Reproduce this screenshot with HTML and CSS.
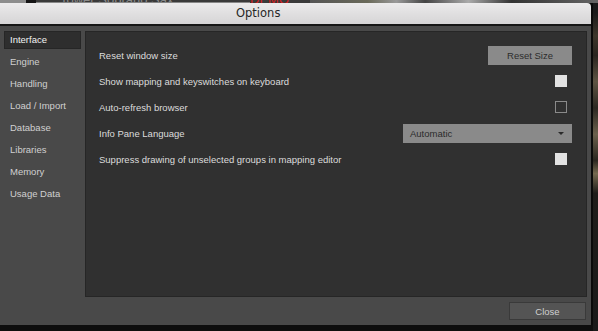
FILE: index.html
```html
<!DOCTYPE html>
<html>
<head>
<meta charset="utf-8">
<link rel="stylesheet" href="styles.css">
</head>
<body>
<div class="screen">
  <div class="app-strip">
    <span class="strip-a"></span>
    <span class="strip-b"></span>
    <span class="strip-name">Tower Soprano Sax</span>
    <span class="strip-demo">DEMO</span>
    <span class="strip-c"></span>
  </div>
  <div class="row-main">
    <div class="window">
      <div class="titlebar"><span class="title">Options</span></div>
      <div class="win-body">
        <div class="main">
          <ul class="sidebar">
            <li class="nav selected">Interface</li>
            <li class="nav">Engine</li>
            <li class="nav">Handling</li>
            <li class="nav">Load / Import</li>
            <li class="nav">Database</li>
            <li class="nav">Libraries</li>
            <li class="nav">Memory</li>
            <li class="nav">Usage Data</li>
          </ul>
          <div class="panel">
            <div class="opt">
              <span class="label">Reset window size</span>
              <button class="btn-reset">Reset Size</button>
            </div>
            <div class="opt">
              <span class="label">Show mapping and keyswitches on keyboard</span>
              <span class="check on"></span>
            </div>
            <div class="opt">
              <span class="label">Auto-refresh browser</span>
              <span class="check"></span>
            </div>
            <div class="opt">
              <span class="label">Info Pane Language</span>
              <div class="select"><span>Automatic</span><span class="arrow"></span></div>
            </div>
            <div class="opt">
              <span class="label">Suppress drawing of unselected groups in mapping editor</span>
              <span class="check on"></span>
            </div>
          </div>
        </div>
        <div class="footer">
          <button class="btn-close">Close</button>
        </div>
      </div>
    </div>
    <div class="side-strip"></div>
  </div>
</div>
</body>
</html>
```
FILE: styles.css
```css
html, body {
  margin: 0;
  padding: 0;
  background: #0e0e0e;
  width: 598px;
  height: 331px;
  overflow: hidden;
}
.screen {
  width: 598px;
  height: 331px;
  font-family: "Liberation Sans", Arial, sans-serif;
}
.app-strip {
  height: 3px;
  display: flex;
  overflow: hidden;
  background: #2b2b2b;
  align-items: flex-end;
}
.strip-a { width: 26px; height: 3px; background: #8d8d8d; }
.strip-b { width: 10px; height: 3px; background: #151515; }
.strip-name {
  width: 190px;
  height: 3px;
  line-height: 0;
  color: #8a8a8a;
  font-size: 13px;
  padding-left: 24px;
  overflow: hidden;
  background: #3a3a3a;
  box-shadow: inset 0 -1px 0 #888;
}
.strip-demo {
  width: 60px;
  height: 3px;
  line-height: 0;
  color: #d42020;
  font-size: 13px;
  overflow: hidden;
  background: #3a3a3a;
}
.strip-c {
  flex: 1;
  height: 3px;
  background: linear-gradient(90deg, #555 0, #6a6a5a 20%, #999 30%, #444 40%, #aaa 55%, #333 70%, #666 100%);
}
.row-main {
  display: flex;
  height: 328px;
}
.window {
  width: 591px;
  height: 322px;
  display: flex;
  flex-direction: column;
  border-right: 2px solid #0a0a0a;
}
.side-strip {
  flex: 1;
  height: 328px;
  background: linear-gradient(180deg, #1a1a1a 0, #1a1a1a 3%, #3d362b 10%, #2a2520 16%, #5e5443 24%, #2c2822 32%, #6b604c 40%, #2b2720 48%, #75694f 52%, #1f1d1a 58%, #1a1a1a 100%);
}
.titlebar {
  height: 21px;
  background: linear-gradient(180deg, #ecebec 0, #e0dfe0 50%, #d6d5d6 100%);
  border-bottom: 2px solid #161616;
  border-top-right-radius: 4px;
  display: flex;
  align-items: center;
}
.title {
  font-family: "DejaVu Sans", sans-serif;
  font-size: 11.5px;
  color: #262626;
  padding-left: 236px;
  line-height: 21px;
}
.win-body {
  flex: 1;
  background: #494949;
  display: flex;
  flex-direction: column;
}
.main {
  display: flex;
  gap: 4px;
  padding: 5px 4px 0 4px;
}
.sidebar {
  list-style: none;
  margin: 0;
  padding: 0;
  width: 77px;
}
.nav {
  height: 18px;
  line-height: 18px;
  margin-bottom: 4px;
  padding-left: 6px;
  font-size: 9.5px;
  color: #d0d0d0;
  box-sizing: border-box;
}
.nav.selected {
  background: #2e2e2e;
  border: 1px solid #262626;
  color: #f2f2f2;
  padding-left: 5px;
  line-height: 16px;
}
.panel {
  width: 502px;
  height: 266px;
  box-sizing: border-box;
  background: #303030;
  border: 1px solid #262626;
  padding: 10px 14px 0 13px;
}
.opt {
  height: 26px;
  display: flex;
  align-items: center;
  justify-content: space-between;
}
.label {
  font-size: 9.5px;
  color: #dcdcdc;
}
.btn-reset {
  width: 84px;
  height: 19px;
  background: #8a8a8a;
  border: none;
  padding: 0;
  font-family: "Liberation Sans", Arial, sans-serif;
  font-size: 9.5px;
  color: #2c2c2c;
}
.check {
  width: 12px;
  height: 12px;
  box-sizing: border-box;
  margin-right: 5px;
  border: 1px solid #8a8a8a;
}
.check.on {
  background: #e2e2e2;
  border-color: #e2e2e2;
}
.select {
  width: 169px;
  height: 19px;
  background: #8a8a8a;
  display: flex;
  align-items: center;
  justify-content: space-between;
  padding: 0 8px 0 7px;
  box-sizing: border-box;
  font-size: 9.5px;
  color: #2a2a2a;
}
.arrow {
  width: 0;
  height: 0;
  border-left: 3px solid transparent;
  border-right: 3px solid transparent;
  border-top: 3px solid #2a2a2a;
}
.footer {
  display: flex;
  justify-content: flex-end;
  padding: 5px 5px 0 0;
}
.btn-close {
  width: 77px;
  height: 18px;
  box-sizing: border-box;
  background: #545454;
  border: 1px solid #3a3a3a;
  padding: 0;
  font-family: "Liberation Sans", Arial, sans-serif;
  font-size: 9.5px;
  color: #d0d0d0;
}
```
